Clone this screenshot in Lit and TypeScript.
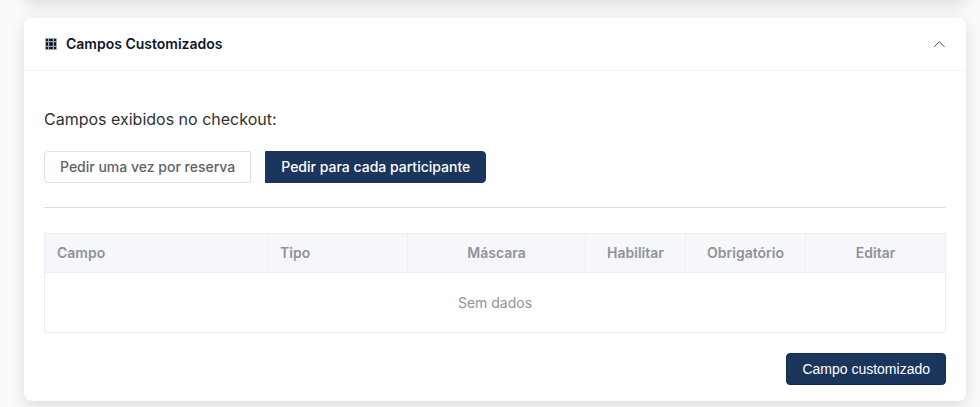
import { LitElement, html, svg, css } from "lit";
import { customElement, state } from "lit/decorators.js";

interface Column {
  label: string;
  name: string;
}

const COLUMNS: Column[] = [
  { label: "Campo", name: "campo" },
  { label: "Tipo", name: "tipo" },
  { label: "Máscara", name: "mascara" },
  { label: "Habilitar", name: "habilitar" },
  { label: "Obrigatório", name: "obrigatorio" },
  { label: "Editar", name: "editar" },
];

const GRID_STOPS = [
  { at: 2, size: 2 },
  { at: 5, size: 4 },
  { at: 10, size: 2 },
];

@customElement("fields-table")
class FieldsTable extends LitElement {
  static styles = css`
    :host {
      display: block;
    }
    table {
      width: 100%;
      table-layout: fixed;
      border-collapse: collapse;
      font-size: 14px;
      line-height: 23px;
      color: #909399;
    }
    th,
    td {
      border: 1px solid #ebeef5;
      text-align: center;
    }
    th {
      height: 36px;
      padding: 0 12px 2px;
      background: #f5f7fa;
      font-weight: 600;
    }
    td {
      height: 59px;
      padding: 0;
    }
    th.campo,
    th.tipo {
      text-align: left;
    }
    col.campo {
      width: 223px;
    }
    col.tipo,
    col.editar {
      width: 140px;
    }
    col.habilitar {
      width: 100px;
    }
    col.obrigatorio {
      width: 120px;
    }
  `;

  render() {
    return html`
      <table>
        <colgroup>
          ${COLUMNS.map((c) => html`<col class=${c.name} />`)}
        </colgroup>
        <thead>
          <tr>
            ${COLUMNS.map((c) => html`<th scope="col" class=${c.name}>${c.label}</th>`)}
          </tr>
        </thead>
        <tbody>
          <tr>
            <td colspan=${COLUMNS.length}>Sem dados</td>
          </tr>
        </tbody>
      </table>
    `;
  }
}

@customElement("app-root")
class AppRoot extends LitElement {
  @state() private mode = "participante";

  @state() private open = true;

  static styles = css`
    :host {
      display: block;
      box-sizing: border-box;
      min-height: 100vh;
      padding: 0 14px 6px 24px;
      overflow: hidden;
      background: #f8fafc;
      font-family: Inter, "Liberation Sans", sans-serif;
      color: #303133;
    }
    .card {
      border-radius: 8px;
      background: #fff;
      box-shadow: 0 5px 16px rgba(0, 0, 0, 0.12);
    }
    .previous {
      height: 80px;
      margin: -80px 0 18px;
    }
    .header {
      display: flex;
      align-items: center;
      width: 100%;
      height: 53px;
      padding: 0 20px;
      border: 0;
      border-bottom: 1px solid #f0f1f4;
      background: none;
      font: 600 14px/20px Inter, "Liberation Sans", sans-serif;
      color: #0f172a;
      text-align: left;
      cursor: pointer;
    }
    h2 {
      margin: 0;
      font: inherit;
    }
    .grid {
      width: 14px;
      height: 14px;
      margin-right: 8px;
    }
    .chevron {
      width: 14px;
      height: 14px;
      margin-left: auto;
    }
    .body {
      padding: 36px 20px 16px;
    }
    h3 {
      margin: 0 0 20px;
      font-size: 16px;
      line-height: 24px;
      font-weight: 400;
    }
    .modes {
      display: flex;
      gap: 14px;
    }
    .button {
      height: 32px;
      padding: 0 15px;
      border: 1px solid #dcdfe6;
      border-radius: 4px;
      background: #fff;
      font: 500 14px/20px Inter, "Liberation Sans", sans-serif;
      color: #606266;
      white-space: nowrap;
      cursor: pointer;
    }
    .first {
      border-radius: 4px 0 0 4px;
    }
    .last {
      border-radius: 0 4px 4px 0;
    }
    .selected {
      border-color: #1b365d;
      background: #1b365d;
      color: #fff;
    }
    hr {
      height: 1px;
      margin: 24px 0 25px;
      border: 0;
      background: #dcdfe2;
    }
    .actions {
      display: flex;
      justify-content: flex-end;
      margin-top: 20px;
    }
    .add {
      border-color: #152b4a;
      background: #1b365d;
      font-family: "Liberation Sans", sans-serif;
      font-weight: 400;
      color: #fff;
    }
  `;

  private modeButton(id: string, label: string, place: string) {
    const on = this.mode === id;
    return html`<button
      type="button"
      class="button ${place} ${on ? "selected" : ""}"
      aria-pressed=${on}
      @click=${() => (this.mode = id)}
    >${label}</button>`;
  }

  private body() {
    return html`
      <div class="body">
        <h3>Campos exibidos no checkout:</h3>
        <div class="modes" role="group" aria-label="Campos exibidos no checkout">
          ${this.modeButton("reserva", "Pedir uma vez por reserva", "first")}
          ${this.modeButton("participante", "Pedir para cada participante", "last")}
        </div>
        <hr />
        <fields-table></fields-table>
        <div class="actions">
          <button type="button" class="button add">Campo customizado</button>
        </div>
      </div>
    `;
  }

  render() {
    return html`
      <div class="card previous"></div>
      <section class="card">
        <button
          type="button"
          class="header"
          aria-expanded=${this.open}
          @click=${() => (this.open = !this.open)}
        >
          <svg class="grid" viewBox="0 0 14 14" shape-rendering="crispEdges" aria-hidden="true">
            <rect x="1" y="1" width="12" height="12" fill="#a4abb3" />
            <g fill="#2f3848">
              ${GRID_STOPS.map((row) =>
                GRID_STOPS.map(
                  (col) =>
                    svg`<rect x=${col.at} y=${row.at} width=${col.size} height=${row.size} />`,
                ),
              )}
            </g>
            <path d="M2 2h2v2h-2z M10 2h2v2h-2z M2 10h2v2h-2z M10 10h2v2h-2z M6 6h2v2h-2z M6 2h2v2h-2z M6 10h2v2h-2z M2 6h2v2h-2z M10 6h2v2h-2z" fill="#0c1426" />
          </svg>
          <h2>Campos Customizados</h2>
          <svg class="chevron" viewBox="0 0 14 14" fill="none" stroke="#55585e" aria-hidden="true">
            <path d="M2 10 L7.300 4.700 L12.600 10" />
          </svg>
        </button>
        ${this.open ? this.body() : null}
      </section>
    `;
  }
}
